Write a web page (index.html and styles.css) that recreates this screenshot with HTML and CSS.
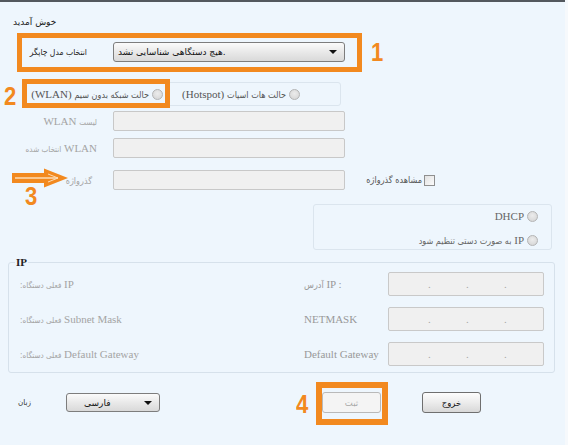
FILE: index.html
```html
<!DOCTYPE html>
<html lang="fa">
<head>
<meta charset="utf-8">
<title>Printer setup</title>
<link rel="stylesheet" href="styles.css">
</head>
<body>
<div class="panel">
  <div class="title" dir="rtl">خوش آمدید</div>

  <div class="row printer-row">
    <span class="printer-lbl fa" dir="rtl">انتخاب مدل چاپگر</span>
    <div class="select printer-select" dir="ltr"><span class="sel-text">هیچ دستگاهی شناسایی نشد.</span><span class="caret"></span></div>
  </div>

  <div class="mode-group">
    <label class="opt opt-wlan" dir="rtl"><span class="radio"></span><span><span class="fa fa-lg">حالت شبکه بدون سیم</span> (WLAN)</span></label>
    <label class="opt opt-hot" dir="rtl"><span class="radio"></span><span><span class="fa fa-lg">حالت هات اسپات</span> (Hotspot)</span></label>
  </div>

  <div class="row field-row row-list">
    <span class="field-lbl" dir="rtl"><span class="fa">لیست</span> WLAN</span>
    <div class="input"></div>
  </div>
  <div class="row field-row row-sel">
    <span class="field-lbl" dir="rtl">WLAN <span class="fa">انتخاب شده</span></span>
    <div class="input"></div>
  </div>
  <div class="row field-row row-pass">
    <span class="field-lbl pass-lbl" dir="rtl"><span class="fa fa-lg">گذرواژه</span></span>
    <div class="input"></div>
    <label class="check-opt" dir="rtl"><span class="checkbox"></span><span class="fa fa-lg">مشاهده گذرواژه</span></label>
  </div>

  <div class="dhcp-group" dir="rtl">
    <label class="opt dhcp-opt"><span class="radio"></span><span>DHCP</span></label>
    <label class="opt dhcp-opt"><span class="radio"></span><span>IP <span class="fa fa-lg">به صورت دستی تنظیم شود</span></span></label>
  </div>

  <fieldset class="ip-set">
    <legend>IP</legend>
    <div class="ip-row">
      <span class="cur" dir="rtl">IP <span class="fa">فعلی دستگاه:</span></span>
      <span class="ip-lbl" dir="ltr"><span class="fa fa-lg">آدرس</span> IP :</span>
      <div class="ip-input"><i>.</i><i>.</i><i>.</i></div>
    </div>
    <div class="ip-row">
      <span class="cur" dir="rtl">Subnet Mask <span class="fa">فعلی دستگاه:</span></span>
      <span class="ip-lbl">NETMASK</span>
      <div class="ip-input"><i>.</i><i>.</i><i>.</i></div>
    </div>
    <div class="ip-row">
      <span class="cur" dir="rtl">Default Gateway <span class="fa">فعلی دستگاه:</span></span>
      <span class="ip-lbl">Default Gateway</span>
      <div class="ip-input"><i>.</i><i>.</i><i>.</i></div>
    </div>
  </fieldset>

  <div class="footer">
    <span class="lang-lbl fa" dir="rtl">زبان</span>
    <div class="select lang-select"><span class="sel-text">فارسی</span><span class="caret"></span></div>
    <button class="btn btn-submit" disabled>ثبت</button>
    <button class="btn btn-exit">خروج</button>
  </div>

  <div class="mark mark-1"></div>
  <div class="mark mark-2"></div>
  <div class="mark mark-4"></div>
  <span class="num num-1">1</span>
  <span class="num num-2">2</span>
  <span class="num num-3">3</span>
  <span class="num num-4">4</span>
  <svg class="arrow3" width="58" height="20" viewBox="0 0 58 20">
    <polygon points="1,5 33,5 33,0.5 57,10 33,19.5 33,15 1,15" fill="#f2891f"/>
    <polyline points="4,10 47,10" stroke="#fcdcb6" stroke-width="1.4" fill="none"/>
    <polyline points="37,6 47,10 37,14" stroke="#fcdcb6" stroke-width="1" fill="none"/>
  </svg>
</div>
<div class="edge"></div>
</body>
</html>
```

FILE: styles.css
```css
* { box-sizing: border-box; }
html, body { margin: 0; padding: 0; }
body {
  width: 568px;
  height: 445px;
  overflow: hidden;
  background: #f6f9fc;
  font-family: "Liberation Serif", "DejaVu Sans", serif;
  font-weight: normal;
  font-size: 11px;
  color: #333;
  display: flex;
}
.panel {
  position: relative;
  width: 565px;
  height: 445px;
  background: #eef6fd;
  border-top: 2px solid #53585e;
}
.edge { flex: 1; background: #f6f9fc; }

.fa {
  font-family: "DejaVu Sans Condensed", "DejaVu Sans", sans-serif;
  font-stretch: condensed;
  font-size: 8px;
}
.fa-lg { font-size: 9px; }

.title {
  direction: ltr;
  padding: 13px 0 0 13px;
  height: 27px;
  line-height: 14px;
  font-family: "DejaVu Sans", sans-serif;
  font-size: 9px;
  color: #1c1c1c;
  text-align: left;
}

.row { display: flex; align-items: center; }

.printer-row { margin-top: 13px; height: 20px; }
.printer-lbl {
  width: 87px;
  text-align: right;
  color: #1c1c1c;
  margin-right: 26px;
  font-size: 8.5px;
}
.select {
  position: relative;
  height: 20px;
  border: 1px solid #7d7d7d;
  border-radius: 3px;
  background: linear-gradient(#fbfbfb, #e9e9e9 50%, #d9d9d9);
  display: flex;
  align-items: center;
  font-family: "DejaVu Sans", sans-serif;
  font-size: 9px;
  color: #111;
}
.printer-select { width: 232px; padding-left: 4px; }
.caret {
  position: absolute;
  right: 7px;
  top: 7px;
  width: 0;
  height: 0;
  border-left: 4px solid transparent;
  border-right: 4px solid transparent;
  border-top: 4px solid #111;
}

.mode-group {
  margin-top: 20px;
  margin-left: 24px;
  width: 317px;
  height: 24px;
  border: 1px solid #dbe5ee;
  border-radius: 3px;
  display: flex;
  align-items: center;
  padding-left: 9px;
  gap: 19px;
}
.opt {
  display: flex;
  align-items: center;
  gap: 3px;
  color: #555;
  font-size: 11px;
  font-weight: normal;
  white-space: nowrap;
}
.opt-wlan { width: 129px; }
.opt-hot { width: 118px; }
.radio {
  flex: none;
  width: 11px;
  height: 11px;
  border-radius: 50%;
  border: 1px solid #b4b4b4;
  background: radial-gradient(circle at 50% 40%, #ececec, #d2d2d2);
}

.field-row { height: 20px; }
.row-list { margin-top: 5px; }
.row-sel { margin-top: 7px; }
.row-pass { margin-top: 12px; }
.field-lbl {
  width: 97px;
  text-align: right;
  color: #a4a4a4;
  font-size: 11px;
  margin-right: 16px;
  white-space: nowrap;
}
.pass-lbl { width: 92px; margin-right: 21px; }
.input {
  width: 232px;
  height: 20px;
  background: #f0f0f0;
  border: 1px solid #c8c8c8;
  border-radius: 2px;
}
.check-opt {
  margin-left: 22px;
  width: 68px;
  display: flex;
  align-items: center;
  gap: 2px;
  color: #555;
  white-space: nowrap;
}
.checkbox {
  flex: none;
  width: 11px;
  height: 11px;
  border: 1px solid #8f8f8f;
  background: linear-gradient(135deg, #e2e2e2, #fbfbfb);
}

.dhcp-group {
  margin-top: 14px;
  margin-left: 313px;
  width: 239px;
  height: 46px;
  border: 1px solid #dbe5ee;
  border-radius: 3px;
  padding: 4px 13px 0 0;
  display: flex;
  flex-direction: column;
  gap: 10px;
}
.dhcp-opt { height: 14px; color: #666; }

.ip-set {
  margin: 6px 0 0 8px;
  width: 547px;
  padding: 4px 10px 6px 11px;
  border: 1px solid #d6e1eb;
  border-radius: 3px;
  display: flex;
  flex-direction: column;
  gap: 11px;
}
.ip-set legend {
  padding: 0 1px;
  margin-left: -5px;
  font-weight: bold;
  font-size: 11px;
  color: #222;
  line-height: 12px;
}
.ip-row { display: flex; align-items: center; height: 24px; }
.cur {
  width: 284px;
  direction: rtl;
  text-align: end;
  color: #a4a4a4;
  white-space: nowrap;
}
.ip-lbl { width: 84px; color: #999; white-space: nowrap; }
.ip-input {
  width: 156px;
  height: 24px;
  background: #f0f0f0;
  border: 1px solid #c9c9c9;
  border-radius: 2px;
  display: flex;
  align-items: center;
  padding-left: 39px;
  gap: 36px;
  color: #a8a8a8;
}
.ip-input i { font-style: normal; width: 2px; }

.footer {
  margin-top: 19px;
  height: 21px;
  display: flex;
  align-items: center;
}
.lang-lbl {
  margin-left: 18px;
  width: 48px;
  text-align: left;
  color: #333;
}
.lang-select { width: 94px; height: 19px; padding-left: 17px; }
.btn {
  height: 21px;
  width: 59px;
  border-radius: 3px;
  font-family: "DejaVu Sans", sans-serif;
  font-size: 8.5px;
  padding: 0;
}
.btn-submit {
  margin-left: 162px;
  border: 1px solid #b9b9b9;
  background: #f4f4f4;
  color: #a8a8a8;
}
.btn-exit {
  margin-left: 41px;
  border: 1px solid #6f6f6f;
  background: linear-gradient(#fdfdfd, #ececec 50%, #d8d8d8);
  color: #111;
}

.mark {
  position: absolute;
  border: 5px solid #f2891f;
}
.mark-1 { left: 17px; top: 31px; width: 345px; height: 39px; }
.mark-2 { left: 22px; top: 77px; width: 148px; height: 29px; }
.mark-4 { left: 316px; top: 380px; width: 72px; height: 43px; border-width: 6px; }
.num {
  position: absolute;
  font-family: "Liberation Sans", Arial, sans-serif;
  font-weight: bold;
  font-size: 26px;
  line-height: 26px;
  color: #f2891f;
  transform: scaleX(0.85);
}
.num-1 { left: 370px; top: 37px; }
.num-2 { left: 3px; top: 81px; }
.num-3 { left: 24px; top: 181px; }
.num-4 { left: 295px; top: 389px; }
.arrow3 { position: absolute; left: 11px; top: 166px; }
```
